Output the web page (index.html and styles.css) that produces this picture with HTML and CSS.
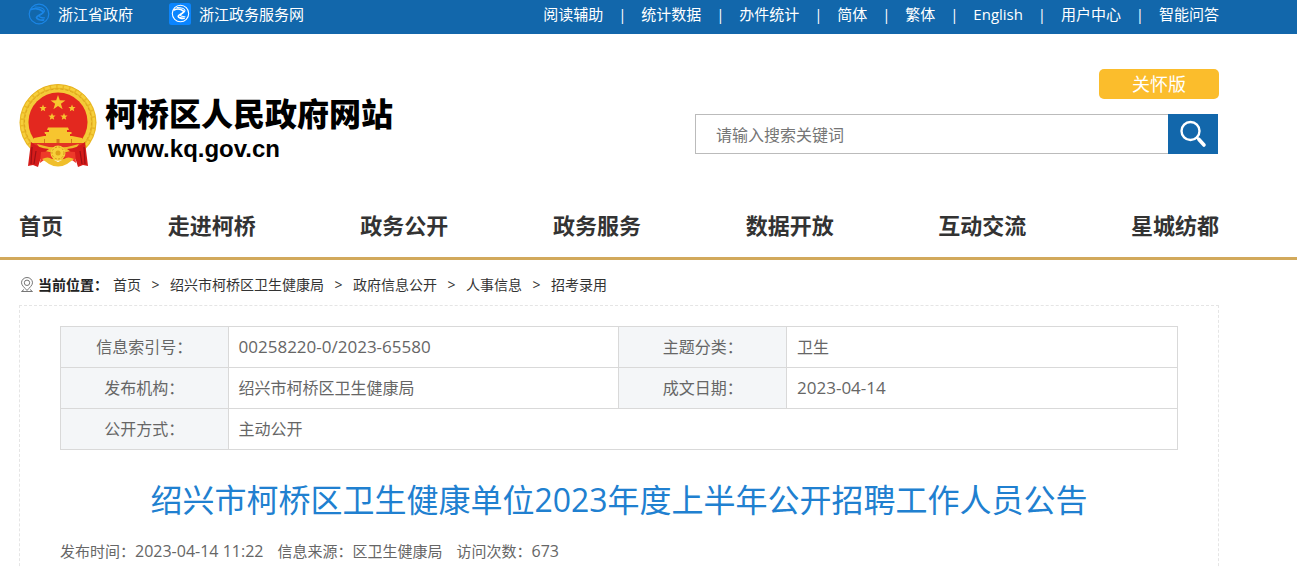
FILE: index.html
```html
<!DOCTYPE html>
<html lang="zh-CN">
<head>
<meta charset="utf-8">
<title>柯桥区人民政府网站</title>
<link rel="stylesheet" href="styles.css">
</head>
<body>
<div class="topbar">
  <div class="wrap topbar-inner">
    <div class="portals">
      <a href="#" class="portal"><svg class="portal-icon" viewBox="0 0 22 22" aria-hidden="true"><g fill="none" stroke="#1b86e6" stroke-linecap="round"><circle cx="11" cy="11" r="9.800" stroke-width="1.200"/><path d="M3 6.500C7 5 12 6 15 8.500c1.500 1.800-6 4-6.500 6 0 1.500 3.500 3 7 2.500" stroke-width="1.800"/><path d="M7 4c5 0 9 1.500 9.500 4 0 2-5 3.500-5.500 5 0 1 3 2 5.500 1.800" stroke-width="1.200"/></g></svg>浙江省政府</a>
      <a href="#" class="portal"><svg class="portal-icon" viewBox="0 0 22 22" aria-hidden="true"><rect width="22" height="22" rx="2.500" fill="#0a85ff"/><g fill="none" stroke="#fff" stroke-linecap="round"><circle cx="11.500" cy="10.500" r="8.200" stroke-width="1.100"/><path d="M5 7C8 5.500 12 6 14.500 8.200c1.200 1.500-5 3.300-5.300 5 0 1.300 3 2.500 6 2" stroke-width="1.600"/><path d="M8 4.500c4.500 0 7.800 1.300 8 3.300 0 1.700-4.300 3-4.600 4.400 0 .8 2.500 1.600 4.600 1.500" stroke-width="1.100"/></g></svg>浙江政务服务网</a>
    </div>
    <ul class="tools">
      <li><a href="#">阅读辅助</a></li>
      <li><a href="#">统计数据</a></li>
      <li><a href="#">办件统计</a></li>
      <li><a href="#">简体</a></li>
      <li><a href="#">繁体</a></li>
      <li><a href="#">English</a></li>
      <li><a href="#">用户中心</a></li>
      <li><a href="#">智能问答</a></li>
    </ul>
  </div>
</div>

<header class="wrap header">
  <a href="#" class="brand">
    <svg class="emblem" viewBox="0 0 78 84" aria-hidden="true">
      <circle cx="39" cy="37" r="37" fill="#e5b01f"/>
      <ellipse cx="39" cy="38.500" rx="38.500" ry="38" fill="#e9b724"/>
      <circle cx="39" cy="38.500" r="36" fill="none" stroke="#f6cf3c" stroke-width="2.500" stroke-dasharray="5 1.500"/>
      <circle cx="39" cy="38.500" r="31.500" fill="none" stroke="#f4cb38" stroke-width="4"/>
      <circle cx="39" cy="38.500" r="33.500" fill="none" stroke="#dca51d" stroke-width="1" stroke-dasharray="3 2"/>
      <circle cx="39" cy="38" r="29.500" fill="#e3281f"/>
      <g fill="#f7c52f">
        <path d="M39 11l1.800 5.300 5.600.1-4.500 3.400 1.700 5.400L39 22l-4.600 3.200 1.700-5.400-4.500-3.400 5.600-.1z"/>
        <path d="M24 20.500l1 2.400 2.600.2-2 1.700.6 2.500-2.200-1.300-2.200 1.300.6-2.500-2-1.700 2.600-.2zM53 20.500l1 2.400 2.600.2-2 1.700.6 2.500-2.200-1.300-2.200 1.300.6-2.500-2-1.700 2.600-.2zM33 29l1 2.400 2.600.2-2 1.700.6 2.500-2.200-1.300-2.200 1.300.6-2.500-2-1.700 2.600-.2zM45 29l1 2.400 2.600.2-2 1.700.6 2.500-2.200-1.300-2.200 1.300.6-2.500-2-1.700 2.600-.2z"/>
        <path d="M29 43.500h20l1 2.500H28zM30 46h18v2H30zM25.500 48h27v2H26zM27 50h24v4H27z"/>
        <path d="M15 54l10-2h28l10 2v5H15z"/>
      </g>
      <path d="M37.500 55h3v4h-3zM25 55h1v4h-1zM52 55h1v4h-1z" fill="#d67a1d"/>
      <path d="M12 59h54l-6 16H18z" fill="#e33324"/>
      <path d="M18 60q21 7 42 0l-4 6q-17 5-34 0z" fill="#efbd2c"/>
      <path d="M12 58q7 6 18 7l-7 5-4 13-5-2-5 1z" fill="#d51c1b"/>
      <path d="M66 58q-7 6-18 7l7 5 4 13 5-2 5 1z" fill="#d51c1b"/>
      <path d="M13 63l-1 17M17 67l-2 13M65 63l1 17M61 67l2 13" fill="none" stroke="#9d1015" stroke-width="1.200"/>
      <path d="M22 68q8-1 11 2l-3 6q-5-1-9 3zM56 68q-8-1-11 2l3 6q5-1 9 3z" fill="#ee3a29"/>
      <path d="M23 75q6-3 10 0l6 3 6-3q4-3 10 0l-7 5q-9 5-18 0z" fill="#f0bf2b"/>
      <circle cx="39" cy="69" r="7.500" fill="#f7d13b"/>
      <circle cx="39" cy="69" r="6" fill="none" stroke="#d6961a" stroke-width="1" stroke-dasharray="2 1.500"/>
      <circle cx="39" cy="69" r="2.500" fill="#e0a31a"/>
    </svg>
    <span class="brand-text">
      <strong class="brand-name">柯桥区人民政府网站</strong>
      <span class="brand-url">www.kq.gov.cn</span>
    </span>
  </a>
  <div class="header-side">
    <button type="button" class="care">关怀版</button>
    <form class="search">
      <input class="search-input" type="text" placeholder="请输入搜索关键词" aria-label="请输入搜索关键词">
      <button type="button" class="search-button" aria-label="搜索"><svg viewBox="0 0 28 28" aria-hidden="true"><g fill="none" stroke="#fff" stroke-linecap="round"><circle cx="11.500" cy="11" r="9" stroke-width="2.400"/><path d="M18 17.500l2 2" stroke-width="2.400"/><path d="M20 19.500l5 5.500" stroke-width="3.600"/></g></svg></button>
    </form>
  </div>
</header>

<nav class="mainnav">
  <div class="wrap mainnav-inner">
    <a href="#">首页</a>
    <a href="#">走进柯桥</a>
    <a href="#">政务公开</a>
    <a href="#">政务服务</a>
    <a href="#">数据开放</a>
    <a href="#">互动交流</a>
    <a href="#">星城纺都</a>
  </div>
</nav>

<main class="wrap">
  <div class="crumbs">
    <svg class="pin" viewBox="0 0 14 16" aria-hidden="true"><g fill="none" stroke="#777" stroke-width="1"><path d="M7 13.500C5 11 1.500 8.500 1.500 5.800a5.500 5.300 0 0 1 11 0C12.500 8.500 9 11 7 13.500z"/><circle cx="7" cy="5.800" r="2.700"/><path d="M4 12.500l-2.500 2h11l-2.500-2"/></g></svg>
    <strong>当前位置：</strong>
    <a href="#">首页</a><span>&gt;</span>
    <a href="#">绍兴市柯桥区卫生健康局</a><span>&gt;</span>
    <a href="#">政府信息公开</a><span>&gt;</span>
    <a href="#">人事信息</a><span>&gt;</span>
    <a href="#">招考录用</a>
  </div>

  <article class="article">
    <table class="info">
      <tr><th scope="row">信息索引号：</th><td class="num">00258220-0/2023-65580</td><th scope="row">主题分类：</th><td>卫生</td></tr>
      <tr><th scope="row">发布机构：</th><td>绍兴市柯桥区卫生健康局</td><th scope="row">成文日期：</th><td class="num">2023-04-14</td></tr>
      <tr><th scope="row">公开方式：</th><td colspan="3">主动公开</td></tr>
    </table>
    <h1 class="title">绍兴市柯桥区卫生健康单位2023年度上半年公开招聘工作人员公告</h1>
    <div class="meta">
      <span>发布时间：<span class="meta-num">2023-04-14 11:22</span></span>
      <span>信息来源：区卫生健康局</span>
      <span>访问次数：<span class="meta-num">673</span></span>
    </div>
  </article>
</main>
</body>
</html>
```
FILE: styles.css
```css
* { box-sizing: border-box; }

body {
  margin: 0;
  background: #fff;
  color: #333;
  font-family: "Open Sans", "Noto Sans CJK SC", sans-serif;
  font-size: 14px;
}

a { color: inherit; text-decoration: none; }

button, input { font-family: inherit; }

.wrap { padding: 0 78px 0 19px; }

.topbar { background: #1267ab; color: #fff; font-size: 15px; }

.topbar-inner {
  display: flex;
  justify-content: space-between;
  height: 34px;
  line-height: 28px;
  white-space: nowrap;
}

.portals { display: flex; gap: 36px; padding-left: 9px; }

.portal { display: flex; gap: 8px; }

.portal-icon { width: 22px; height: 22px; margin-top: 3px; }

.tools { display: flex; margin: 0; padding: 0; list-style: none; }

.tools li + li::before { content: "|"; display: inline-block; width: 38px; text-align: center; }

.header {
  display: flex;
  justify-content: space-between;
  align-items: flex-start;
  padding-top: 35px;
}

.brand { display: flex; gap: 8px; padding-top: 15px; color: #000; }

.emblem { width: 78px; height: 84px; }

.brand-text { display: flex; flex-direction: column; padding-top: 11px; }

.brand-name { font-size: 32px; font-weight: 900; line-height: 38px; }

.brand-url {
  padding-left: 3px;
  font-family: "Liberation Sans", Arial, sans-serif;
  font-size: 24px;
  font-weight: 700;
  line-height: 32px;
}

.header-side {
  display: flex;
  flex-direction: column;
  align-items: flex-end;
  gap: 15px;
  width: 524px;
}

.care {
  width: 120px;
  height: 30px;
  padding: 0;
  border: 0;
  border-radius: 5px;
  background: #fbbd2c;
  color: #fff;
  font-size: 18px;
  line-height: 30px;
}

.search { display: flex; width: 100%; height: 40px; padding-right: 1px; }

.search-input {
  flex: 1;
  min-width: 0;
  padding: 2px 20px 0;
  border: 1px solid #bbb;
  border-right: 0;
  border-radius: 0;
  font-size: 16px;
}

.search-input::placeholder { color: #757575; }

.search-button {
  display: flex;
  align-items: center;
  justify-content: center;
  width: 50px;
  padding: 0;
  border: 0;
  background: #1267ab;
}

.search-button svg { width: 28px; height: 28px; }

.mainnav { margin-top: 27px; border-bottom: 3px solid #d2a95b; }

.mainnav-inner {
  display: flex;
  justify-content: space-between;
  padding-bottom: 2px;
  color: #333;
  font-size: 22px;
  font-weight: 700;
  line-height: 60px;
}

.crumbs {
  display: flex;
  align-items: center;
  height: 45px;
  padding: 4px 0 0 1px;
  line-height: 20px;
}

.crumbs strong { margin: 0 5px 0 4px; color: #222; }

.crumbs span { width: 29px; text-align: center; }

.pin { width: 14px; height: 16px; }

.article { padding: 20px 40px; border: 1px dashed #e5e5e5; border-bottom: 0; }

.info {
  width: 100%;
  border-collapse: collapse;
  table-layout: fixed;
  color: #666;
  font-size: 16px;
  line-height: 40px;
}

.info th, .info td { height: 41px; padding: 0 10px; border: 1px solid #d9d9d9; }

.info th { width: 15%; background: #f4f6f8; font-weight: 400; text-align: center; }

.info td { width: 35%; }

.info .num { font-size: 17px; }

.title {
  margin: 26px 0 0;
  color: #2080d0;
  font-size: 32px;
  font-weight: 400;
  line-height: 48px;
  text-align: center;
}

.meta {
  display: flex;
  gap: 14px;
  margin-top: 17px;
  color: #666;
  font-size: 15px;
  line-height: 20px;
}

.meta-num { font-size: 16px; }
```
